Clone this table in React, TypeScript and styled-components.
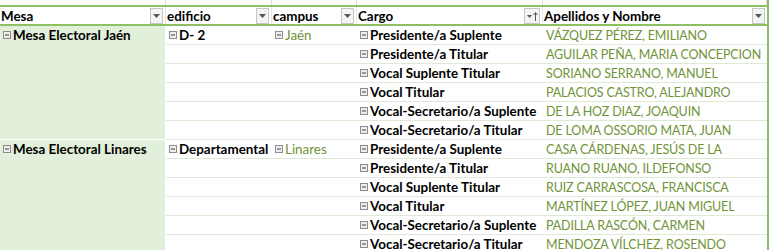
import React from 'react';
import styled, { createGlobalStyle } from 'styled-components';

const GlobalStyle = createGlobalStyle`
  html, body {
    margin: 0;
    padding: 0;
    background: #ffffff;
  }
  body {
    font-family: Lato, "Liberation Sans", sans-serif;
    font-size: 13.4px;
    color: #000;
  }
`;

const COLS = [166, 106, 85, 186, 224];
const GREEN = '#8cc063';
const LINE = '#dfead6';
const FILL = '#e2efda';
const OLIVE = '#6f9438';

const Sheet = styled.div`
  width: 767px;
  border-right: 2px solid ${GREEN};
  overflow: hidden;
  height: 250px;
`;

const TopStrip = styled.div`
  display: flex;
  height: 5px;
`;

const StripCell = styled.div<{ w: number }>`
  width: ${p => p.w}px;
  flex: none;
  box-sizing: border-box;
  border-right: 1px solid #dcdcdc;
`;

const HeaderRow = styled.div`
  display: flex;
  height: 17px;
  border-top: 2px solid ${GREEN};
  border-bottom: 2px solid ${GREEN};
`;

const HeaderCell = styled.div<{ w: number }>`
  width: ${p => p.w}px;
  flex: none;
  box-sizing: border-box;
  display: flex;
  align-items: center;
  justify-content: space-between;
  padding: 0 2px 0 1px;
  font-weight: 700;
  border-right: 1px solid #e4e4e4;
  &:last-child {
    border-right: none;
  }
`;

const DropButton = styled.div<{ sort?: boolean }>`
  width: ${p => (p.sort ? 16 : 13)}px;
  height: 16px;
  box-sizing: border-box;
  border: 1px solid #c6c6c6;
  background: #f4f4f4;
  display: flex;
  align-items: flex-start;
  justify-content: center;
  padding-top: ${p => (p.sort ? 3 : 5)}px;
`;

const Group = styled.div`
  display: flex;
`;

const MesaCell = styled.div`
  width: ${COLS[0]}px;
  flex: none;
  box-sizing: border-box;
  background: ${FILL};
  border-bottom: 1px solid #fff;
  border-right: 1px solid #fff;
`;

const Rows = styled.div`
  display: flex;
  flex-direction: column;
`;

const Row = styled.div`
  display: flex;
  height: 19px;
`;

const Cell = styled.div<{ w: number; tone?: 'bold' | 'green' | 'name' }>`
  width: ${p => p.w}px;
  flex: none;
  box-sizing: border-box;
  border-bottom: 1px solid ${LINE};
  display: flex;
  align-items: center;
  gap: 2px;
  padding-left: 3px;
  white-space: nowrap;
  overflow: hidden;
  font-weight: ${p => (p.tone === 'bold' ? 700 : 400)};
  color: ${p => (p.tone === 'bold' ? '#000' : OLIVE)};
  font-size: ${p => (p.tone === 'name' ? '12.5px' : 'inherit')};
  letter-spacing: ${p => (p.tone === 'name' ? '-0.15px' : 'normal')};
`;

const MesaLabel = styled.div`
  height: 18px;
  display: flex;
  align-items: center;
  gap: 2px;
  padding-left: 3px;
  font-weight: 700;
  white-space: nowrap;
`;

const Collapse = () => (
  <svg width="8" height="8" viewBox="0 0 8 8" style={{ flex: 'none' }}>
    <rect x="0.5" y="0.5" width="7" height="7" fill="#eeeeee" stroke="#8c8c8c" />
    <line x1="2" y1="4" x2="6" y2="4" stroke="#404040" strokeWidth="1" />
  </svg>
);

const Triangle = () => (
  <svg width="7" height="4" viewBox="0 0 7 4">
    <path d="M0 0 L7 0 L3.5 4 Z" fill="#555" />
  </svg>
);

const SortIcon = () => (
  <svg width="11" height="9" viewBox="0 0 11 9">
    <path d="M0 3 L5 3 L2.5 6 Z" fill="#555" />
    <line x1="8.5" y1="1" x2="8.5" y2="9" stroke="#555" />
    <path d="M6.5 3 L8.5 0.5 L10.5 3" fill="none" stroke="#555" />
  </svg>
);

type Entry = { cargo: string; name: string };

const CARGOS = [
  'Presidente/a Suplente',
  'Presidente/a Titular',
  'Vocal Suplente Titular',
  'Vocal Titular',
  'Vocal-Secretario/a Suplente',
  'Vocal-Secretario/a Titular',
];

const groups: { mesa: string; edificio: string; campus: string; people: Entry[] }[] = [
  {
    mesa: 'Mesa Electoral Jaén',
    edificio: 'D- 2',
    campus: 'Jaén',
    people: [
      'VÁZQUEZ PÉREZ, EMILIANO',
      'AGUILAR PEÑA, MARIA CONCEPCION',
      'SORIANO SERRANO, MANUEL',
      'PALACIOS CASTRO, ALEJANDRO',
      'DE LA HOZ DIAZ, JOAQUIN',
      'DE LOMA OSSORIO MATA, JUAN',
    ].map((name, i) => ({ cargo: CARGOS[i], name })),
  },
  {
    mesa: 'Mesa Electoral Linares',
    edificio: 'Departamental',
    campus: 'Linares',
    people: [
      'CASA CÁRDENAS, JESÚS DE LA',
      'RUANO RUANO, ILDEFONSO',
      'RUIZ CARRASCOSA, FRANCISCA',
      'MARTÍNEZ LÓPEZ, JUAN MIGUEL',
      'PADILLA RASCÓN, CARMEN',
      'MENDOZA VÍLCHEZ, ROSENDO',
    ].map((name, i) => ({ cargo: CARGOS[i], name })),
  },
];

const headers = ['Mesa', 'edificio', 'campus', 'Cargo', 'Apellidos y Nombre'];

export default function App() {
  return (
    <>
      <GlobalStyle />
      <Sheet>
        <TopStrip>
          {COLS.map((w, i) => (
            <StripCell key={i} w={w} />
          ))}
        </TopStrip>
        <HeaderRow>
          {headers.map((h, i) => (
            <HeaderCell key={h} w={COLS[i]}>
              <span>{h}</span>
              {i === 3 ? (
                <DropButton sort>
                  <SortIcon />
                </DropButton>
              ) : (
                <DropButton>
                  <Triangle />
                </DropButton>
              )}
            </HeaderCell>
          ))}
        </HeaderRow>
        {groups.map(g => (
          <Group key={g.mesa}>
            <MesaCell>
              <MesaLabel>
                <Collapse />
                {g.mesa}
              </MesaLabel>
            </MesaCell>
            <Rows>
              {g.people.map((p, i) => (
                <Row key={p.name}>
                  <Cell w={COLS[1]} tone="bold">
                    {i === 0 && (
                      <>
                        <Collapse />
                        {g.edificio}
                      </>
                    )}
                  </Cell>
                  <Cell w={COLS[2]} tone="green">
                    {i === 0 && (
                      <>
                        <Collapse />
                        {g.campus}
                      </>
                    )}
                  </Cell>
                  <Cell w={COLS[3]} tone="bold">
                    <Collapse />
                    {p.cargo}
                  </Cell>
                  <Cell w={COLS[4]} tone="name">
                    {p.name}
                  </Cell>
                </Row>
              ))}
            </Rows>
          </Group>
        ))}
      </Sheet>
    </>
  );
}
